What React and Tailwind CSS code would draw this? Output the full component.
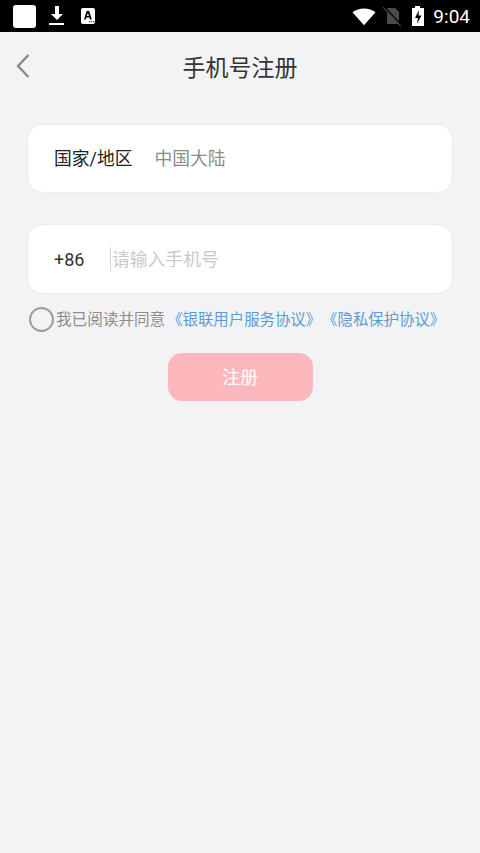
import React from "react";

const cjk = "font-['Roboto','Noto_Sans_CJK_SC',sans-serif]";

function StatusBar() {
    return (
        <div className="flex h-8 items-center justify-between bg-black pl-[13px] pr-[10px]">
            <div className="flex items-center">
                <div className="h-[23px] w-[23px] rounded-[3px] bg-white" />
                <svg width="18" height="22" viewBox="0 0 18 22" className="ml-[12px]">
                    <path d="M7 1h4v8h4l-6 6-6-6h4z" fill="#fff" />
                    <rect x="1" y="18" width="15" height="2" fill="#fff" />
                </svg>
                <div className="relative ml-[15px] h-[16px] w-[14px] rounded-[2px] bg-white">
                    <svg width="14" height="16" viewBox="0 0 14 16">
                        <path d="M5.600 3h2.600l2.600 8.500H8.900l-.5-2H5.300l-.5 2H3zm1.300 2L5.800 8h2.200z" fill="#000" />
                        <rect x="8" y="13" width="1.200" height="1.200" fill="#444" />
                        <rect x="10" y="13" width="1.200" height="1.200" fill="#444" />
                        <rect x="12" y="13" width="1.200" height="1.200" fill="#444" />
                    </svg>
                </div>
            </div>
            <div className="flex items-center">
                <svg width="24" height="19" viewBox="0 0 26 20">
                    <path d="M0.500 5.500C7 0 19 0 25.500 5.500L13 19.500z" fill="#fff" />
                </svg>
                <svg width="20" height="22" viewBox="0 0 20 22" className="ml-[6px]">
                    <path d="M5 3h8l4 4v12H5z" fill="#4a4a4a" />
                    <path d="M1 2l18 19" stroke="#4a4a4a" strokeWidth="1.400" />
                    <path d="M1.500 1l18 19" stroke="#000" strokeWidth="1.200" />
                </svg>
                <svg width="14" height="22" viewBox="0 0 14 22" className="ml-[9px]">
                    <path d="M4 1h5v2h4v18H1V3h3z" fill="#fff" />
                    <path d="M8 5l-4 8h3l-1 6 4.500-8.500H7.500z" fill="#000" />
                </svg>
                <span className="ml-[8px] font-['Roboto',sans-serif] text-[19px] leading-none text-white">9:04</span>
            </div>
        </div>
    );
}

function App() {
    return (
        <div className={`flex min-h-[853px] flex-col bg-[#f3f3f5] ${cjk}`}>
            <StatusBar />

            <div className="relative flex h-[72px] items-center justify-center">
                <svg width="16" height="26" viewBox="0 0 16 26" className="absolute left-[15px] top-[21px]">
                    <path d="M13.500 2L3 13l10.500 11" fill="none" stroke="#8a8a8a" strokeWidth="2.400" />
                </svg>
                <h1 className="text-[23px] font-normal leading-none text-[#333]">手机号注册</h1>
            </div>

            <div className="mt-5 flex flex-col px-[27px]">
                <div className="flex h-[69px] items-center rounded-[16px] border border-[#ececee] bg-white pl-[26px] pt-[1px]">
                    <span className="text-[17.800px] text-[#222]">国家/地区</span>
                    <span className="ml-[22px] text-[17.800px] text-[#8c8c8c]">中国大陆</span>
                </div>

                <div className="mt-[31px] flex h-[70px] items-center rounded-[16px] border border-[#ececee] bg-white pl-[26px]">
                    <span className="w-[56px] text-[18px] text-[#333]">+86</span>
                    <div className="h-[24px] w-px bg-[#d5d5d8]" />
                    <span className="ml-px pt-[2px] text-[17.800px] text-[#c9c9cc]">请输入手机号</span>
                </div>

                <div className="mt-[13px] flex items-center pl-[2px]">
                    <div className="h-[25px] w-[25px] rounded-full border-[2.500px] border-[#9c9c9c]" />
                    <span className="ml-[2px] whitespace-nowrap pt-[2px] text-[15.600px] text-[#8c8c8c]">我已阅读并同意</span>
                    <span className="ml-[2px] whitespace-nowrap pt-[2px] text-[15.400px] text-[#5b9bd5]">《银联用户服务协议》</span>
                    <span className="ml-[1px] whitespace-nowrap pt-[2px] text-[15.400px] text-[#5b9bd5]">《隐私保护协议》</span>
                </div>

                <button className="mx-auto mt-[21px] h-[48px] w-[145px] rounded-[14px] bg-[#fcb8bc] pt-[1px] text-[18px] text-white">
                    注册
                </button>
            </div>
        </div>
    );
}

export default App;
